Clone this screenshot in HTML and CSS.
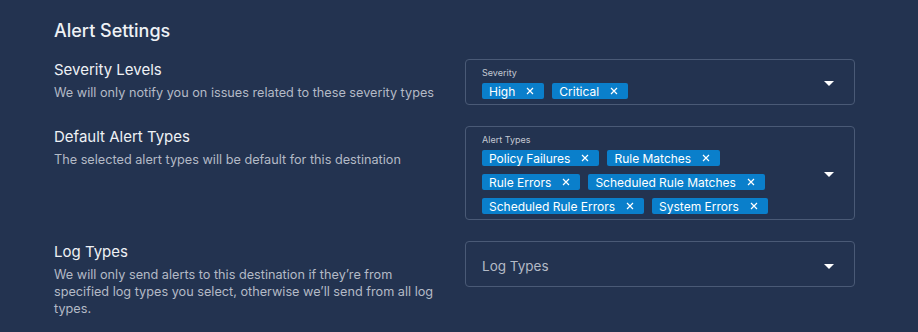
FILE: index.html
```html
<!DOCTYPE html>
<html>
<head>
<meta name="viewport" content="width=device-width, initial-scale=1">
<link rel="stylesheet" href="styles.css">
</head>
<body>
<div class="panel">
  <h2 class="title">Alert Settings</h2>

  <div class="row">
    <div class="info">
      <div class="label">Severity Levels</div>
      <div class="desc">We will only notify you on issues related to these severity types</div>
    </div>
    <div class="field">
      <div class="field-body">
        <div class="field-label">Severity</div>
        <div class="chips">
          <span class="chip">High<svg class="x" viewBox="0 0 8 8"><path d="M1 1L7 7M7 1L1 7"/></svg></span>
          <span class="chip">Critical<svg class="x" viewBox="0 0 8 8"><path d="M1 1L7 7M7 1L1 7"/></svg></span>
        </div>
      </div>
      <span class="caret"></span>
    </div>
  </div>

  <div class="row">
    <div class="info">
      <div class="label">Default Alert Types</div>
      <div class="desc">The selected alert types will be default for this destination</div>
    </div>
    <div class="field">
      <div class="field-body">
        <div class="field-label">Alert Types</div>
        <div class="chips">
          <span class="chip">Policy Failures<svg class="x" viewBox="0 0 8 8"><path d="M1 1L7 7M7 1L1 7"/></svg></span>
          <span class="chip">Rule Matches<svg class="x" viewBox="0 0 8 8"><path d="M1 1L7 7M7 1L1 7"/></svg></span>
          <span class="chip">Rule Errors<svg class="x" viewBox="0 0 8 8"><path d="M1 1L7 7M7 1L1 7"/></svg></span>
          <span class="chip">Scheduled Rule Matches<svg class="x" viewBox="0 0 8 8"><path d="M1 1L7 7M7 1L1 7"/></svg></span>
          <span class="chip">Scheduled Rule Errors<svg class="x" viewBox="0 0 8 8"><path d="M1 1L7 7M7 1L1 7"/></svg></span>
          <span class="chip">System Errors<svg class="x" viewBox="0 0 8 8"><path d="M1 1L7 7M7 1L1 7"/></svg></span>
        </div>
      </div>
      <span class="caret"></span>
    </div>
  </div>

  <div class="row">
    <div class="info">
      <div class="label">Log Types</div>
      <div class="desc">We will only send alerts to this destination if they’re from specified log types you select, otherwise we’ll send from all log types.</div>
    </div>
    <div class="field field-empty">
      <div class="field-body">
        <div class="placeholder">Log Types</div>
      </div>
      <span class="caret"></span>
    </div>
  </div>
</div>
</body>
</html>
```

FILE: styles.css
```css
body {
  margin: 0;
  background-color: #233350;
  font-family: Inter, "Noto Sans", sans-serif;
  color: #eef1f5;
}
.panel {
  padding: 19px 63px 0 54px;
}
.title {
  margin: 0 0 16px 0;
  font-size: 18px;
  font-weight: 500;
  line-height: 24px;
}
.row {
  display: grid;
  grid-template-columns: 386px 390px;
  column-gap: 25px;
  align-items: start;
  margin-bottom: 21px;
}
.label {
  font-size: 15px;
  line-height: 22px;
}
.desc {
  font-size: 12.7px;
  line-height: 17px;
  color: #b3bac6;
  margin-top: 3px;
}
.field {
  border: 1px solid #4a5a76;
  border-radius: 4px;
  display: flex;
  align-items: center;
  padding: 7px 20px 5px 16px;
}
.field-body {
  flex: 1;
}
.field-label {
  font-size: 9px;
  line-height: 12px;
  color: #c3c9d3;
  margin-bottom: 4px;
}
.chips {
  display: flex;
  flex-wrap: wrap;
  gap: 8px;
}
.chip {
  display: inline-flex;
  align-items: center;
  height: 16px;
  background-color: #0a7fcb;
  border-radius: 2px;
  padding: 0 10px 0 7px;
  font-size: 12px;
  color: #ffffff;
}
.x {
  width: 8px;
  height: 8px;
  margin-left: 11px;
  stroke: #ffffff;
  stroke-width: 1.2;
  fill: none;
}
.field-empty {
  padding: 15px 20px 11px 16px;
}
.placeholder {
  font-size: 13.5px;
  line-height: 18px;
  color: #b3bac6;
}
.caret {
  width: 0;
  height: 0;
  border-left: 5px solid transparent;
  border-right: 5px solid transparent;
  border-top: 5px solid #ffffff;
}
```
